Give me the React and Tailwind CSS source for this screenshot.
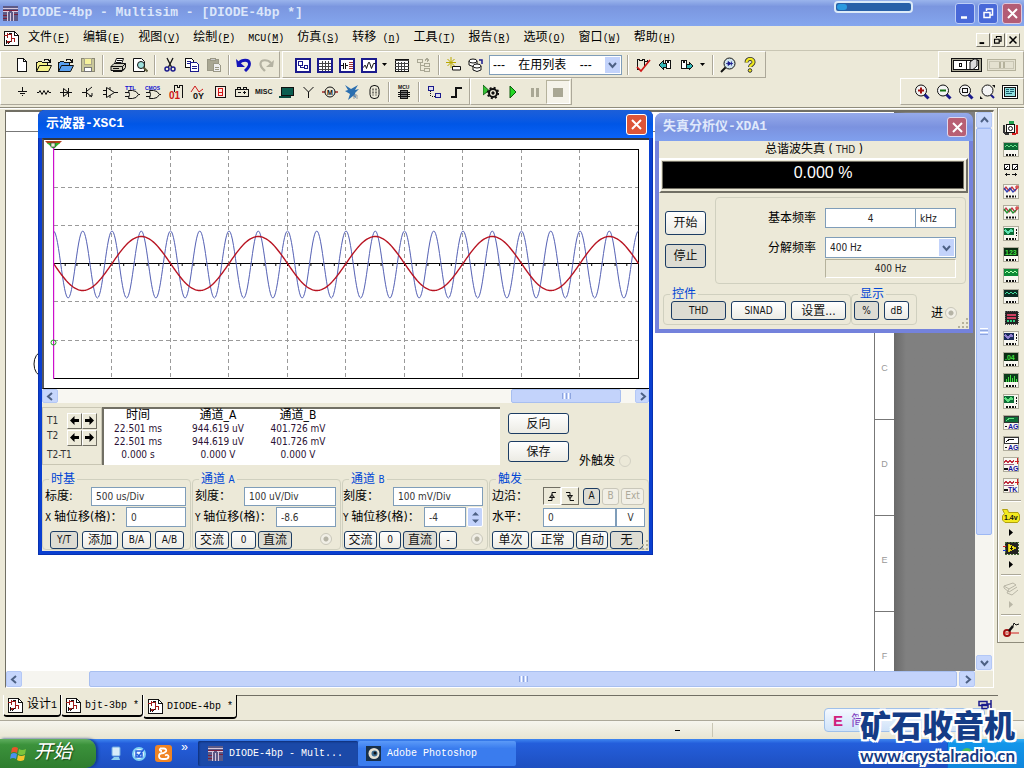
import React from 'react';

const K = '#111';
const NAVY = '#1a1a8c';

function Svg({ w = 16, h = 16, children, smooth = false }) {
  return (
    <svg width={w} height={h} viewBox={`0 0 ${w} ${h}`} fill="none" stroke={K} strokeWidth="1"
      shapeRendering={smooth ? 'auto' : 'crispEdges'} aria-hidden="true">
      {children}
    </svg>
  );
}

const folder = (c) => (
  <Svg>
    <path d="M.5 14.5v-9h1l1-1h3l1 1h5v3" fill={c} />
    <path d="M.5 14.5l3-6h12l-3 6z" fill={c} shapeRendering="auto" />
    <path d="M8 3.500l1-1h3l2 2M14.500 5.500v-4M11 5.500h4" />
  </Svg>
);
const framed = (inner) => (
  <Svg>
    <rect x="1" y="2" width="14" height="13" fill="#fff" stroke={NAVY} strokeWidth="2" />
    {inner}
  </Svg>
);
const magnifier = (inner) => (
  <Svg smooth>
    <path d="M10 10l4.500 4.500" stroke={NAVY} strokeWidth="3" />
    <circle cx="7" cy="6.500" r="5.500" fill="#f4f4f4" />
    {inner}
  </Svg>
);
const gate = (
  <path d="M4.500 6.500h4q4 0 6 4q-2 4-6 4h-4q2-4 0-8zM1 8.500h4M1 12.500h4M14.500 10.500h1.500" shapeRendering="auto" />
);
const miniText = (x, y, t, c, s = 6) => (
  <text x={x} y={y} fill={c} stroke="none" fontSize={s} fontWeight="bold" fontFamily="Liberation Sans, sans-serif">{t}</text>
);

const ICONS = {
  new: <Svg><path d="M3.500 1.500h6l3 3v10h-9z" fill="#fff" /><path d="M9.500 1.500v3h3" /></Svg>,
  open: folder('#f4f08a'),
  openBlue: folder('#5aa0f0'),
  save: <Svg><path d="M1.500 1.500h13v13h-13z" fill="#c9c79a" stroke="#8a8874" /><path d="M4.500 1.500h7v6h-7z" fill="#f6f29c" stroke="#a9a58a" /><path d="M4.500 10.500h7v4h-7z" fill="#fff" stroke="#777" /></Svg>,
  print: <Svg smooth><path d="M4.500 7l2-5.500h7L11.500 7" fill="#fff" /><path d="M1 9.500l3-3h11.500v4l-3 3H1z" fill="#cfcdbf" /><path d="M1 9.500h11.500l3-3M12.500 9.500v4M3 11.500h6M3 14.500h9l3-3M7 3.500h5M6 5.500h5" /></Svg>,
  preview: <Svg smooth><path d="M1.500 1.500h8l3 3v10h-11z" fill="#fff" /><circle cx="9" cy="8" r="3.500" fill="#9fe0dc" /><path d="M11.500 10.500l4 4" strokeWidth="2" stroke="#5b5b3b" /></Svg>,
  cut: <Svg smooth><path d="M5 1l4.500 9M11 1L6.500 10" strokeWidth="1.300" /><circle cx="5" cy="12" r="2" stroke={NAVY} strokeWidth="1.500" /><circle cx="11" cy="12" r="2" stroke={NAVY} strokeWidth="1.500" /></Svg>,
  copy: <Svg><path d="M1.500 1.500h6l2 2v7h-8z" fill="#fff" /><path d="M6.500 5.500h6l2 2v7h-8z" fill="#fff" stroke={NAVY} /><path d="M3 4.500h4M3 6.500h3M8 9.500h5M8 11.500h5" stroke={NAVY} /></Svg>,
  paste: <Svg><path d="M1.500 2.500h11v11h-11z" fill="#a9a793" stroke="#9a9886" /><path d="M4.500 1.500h5v2h-5z" fill="#ccc" stroke="#9a9886" /><path d="M7.500 6.500h5l2 2v6h-7z" fill="#eee" stroke="#9a9886" /><path d="M9 10.500h4M9 12.500h4" stroke="#9a9886" /></Svg>,
  undo: <Svg smooth><path d="M3 6C6 2.500 13 2 13.500 6.500C13.800 10 11 12 9 14" stroke="#1414b8" strokeWidth="2.800" /><path d="M0 2l1 8h8z" fill="#1414b8" stroke="none" /></Svg>,
  redo: <Svg smooth><path d="M13 6C10 2.500 3 2 2.500 6.500C2.200 10 5 12 7 14" stroke="#b4b2a2" strokeWidth="2.200" /><path d="M16 3l-1 7H8z" fill="#b4b2a2" stroke="none" /></Svg>,
  schematic: framed(<path d="M3.500 4.500h4v4h-4zM9.500 8.500h3v3h-3zM5.500 8.500v2h4" stroke={NAVY} />),
  grid: framed(<path d="M2 6.500h12M2 9.500h12M2 12.500h12M5.500 4v10M8.500 4v10M11.500 4v10" stroke="#444" />),
  compList: framed(<><path d="M2 8.500h2M4.500 6v6M6.500 6v6M7 8.500h2" /><path d="M10 5.500h4M10 7.500h4M10 9.500h4M10 11.500h4" stroke="#a03030" /></>),
  graph: framed(<path d="M2.500 10.500l1-2h1l1 3l2-6h1l2 6l2-5h2" shapeRendering="auto" />),
  spread: <Svg><path d="M1.500 2.500h13v12h-13z" fill="#fff" /><path d="M1 3.500h14M1 6.500h14M1 9.500h14M1 12.500h14M4.500 5v9M7.500 5v9M10.500 5v9" stroke="#444" /></Svg>,
  tree: <Svg><path d="M1.500 2.500h5v3h-5zM8.500 6.500h5v3h-5zM8.500 11.500h5v3h-5zM4 6v7h4M4 8.500h4M11 5V1M9 3.500l2-2l2 2" stroke="#a9a794" /></Svg>,
  wizard: <Svg smooth><path d="M5 0v11M0 5.500h10M1.500 2l7 7M8.500 2l-7 7" stroke="#b8a800" /><path d="M6.500 9.500h8v3.500h-8z" fill="#fff" /></Svg>,
  database: <Svg smooth><path d="M1 4v4q4 3 8 0V4" fill="#fff" /><ellipse cx="5" cy="4" rx="4" ry="2" fill="#fff" /><path d="M5 9v4q4 3 8 0V9" fill="#fff" /><ellipse cx="9" cy="9" rx="4" ry="2" fill="#fff" /><path d="M11 3h3v4" stroke={NAVY} strokeWidth="1.500" /></Svg>,
  erc: <Svg><path d="M5 12.500h-2.500v-10h2v1h3v-1h2v6M10 4.500h2.500v-2" /><path d="M2 10l4 4l9-11" stroke="#d01818" strokeWidth="1.700" shapeRendering="auto" /></Svg>,
  back: <Svg><path d="M8.500 5.500v-2h2v2h1v-2h2v8h-5" fill="#fff" /><path d="M2 8l4-4v2h3v4H6v2z" fill="#35b8b8" /></Svg>,
  fwd: <Svg><path d="M8.500 11.500h-6v-8h2v2h1v-2h2v3" fill="#fff" /><path d="M14 9l-4-4v2H7v4h3v2z" fill="#35b8b8" /></Svg>,
  find: <Svg smooth><path d="M6 10l-5 5" stroke={K} strokeWidth="2" /><circle cx="9.500" cy="6.500" r="5.500" fill="#cfe4ee" /><path d="M8 4.500v4l3-2zM6 6.500h7M11.500 4.500v4" fill={NAVY} stroke={NAVY} strokeWidth=".8" /></Svg>,
  help: <Svg smooth><path d="M4.500 5.500c0-5 7.500-4.500 7 0c0 2-3.500 2.500-3.500 4.500" stroke="#333" strokeWidth="4" /><path d="M4.500 5.500c0-5 7.500-4.500 7 0c0 2-3.500 2.500-3.500 4.500" stroke="#f0e820" strokeWidth="2.300" /><circle cx="8" cy="13.500" r="1.800" fill="#f0e820" stroke="#333" /></Svg>,
  ground: <Svg><path d="M8.500 3v4M4 7.500h9M6 9.500h5M8 11.500h1" /></Svg>,
  resistor: <Svg w={18}><path d="M2 8.500h2l1-2l2 4l2-4l2 4l2-4l1 2h2" shapeRendering="auto" /></Svg>,
  diode: <Svg><path d="M2 8.500h12M5.500 4.500v8l5-4zM10.500 4v9" shapeRendering="auto" /></Svg>,
  transistor: <Svg><path d="M2 8.500h4M6.500 4v9M7 7l5-4M7 9l5 4M9 12h3v-3" shapeRendering="auto" /></Svg>,
  analog: <Svg><path d="M4.500 3.500v10l8-5zM1 6.500h3M1 10.500h3M12 8.500h4M8 3v3M8 11v3" shapeRendering="auto" /></Svg>,
  ttl: <Svg>{gate}{miniText(1, 6, 'TTL', '#1414d0', 6)}</Svg>,
  cmos: <Svg w={18}>{gate}{miniText(0, 6, 'CMOS', '#1414d0', 5)}</Svg>,
  digital: <Svg><path d="M6.500 8v-6.500h3v2h2v-2h3v12" />{miniText(1, 15, '01', '#d01818', 10)}</Svg>,
  mixed: <Svg smooth><path d="M1 8L5 2l4 6l4-3" stroke="#d01818" />{miniText(3, 15, '0Y', K, 9)}</Svg>,
  indicator: <Svg><path d="M3.500 2.500h10v11h-10z" fill="#fde9e4" /><path d="M6.500 4.500h4v7h-4zM6 8.500h5" stroke="#d01818" /></Svg>,
  power: <Svg><path d="M1.500 5.500h13v7h-13zM3.500 5V3h3v2M9.500 5V3h3v2M4 8.500h3M9 8.500h3M10.500 7v3" /></Svg>,
  misc: <Svg w={20}>{miniText(1, 10, 'MISC', K, 7)}</Svg>,
  periph: <Svg><path d="M3.500 3.500h12v8h-12z" fill="#0b5d50" /><path d="M1 12.500h12" strokeWidth="2" stroke="#0a4a40" /></Svg>,
  rf: <Svg><path d="M8.500 14v-6M8.500 8l-5-5M8.500 8l5-5" shapeRendering="auto" /></Svg>,
  motor: <Svg smooth><path d="M0 8h16" stroke="#a02828" strokeWidth="1.500" /><circle cx="8" cy="8" r="5" fill="#ece9d8" />{miniText(5, 11, 'M', K, 7)}</Svg>,
  ni: <Svg smooth><path d="M1 1l6 4l7-4l-3 5l4-1l-4 4l1 5l-3-2l-5 4l2-6L1 7l3-1z" fill="#2a6fb0" stroke="none" /><path d="M10 15v-4h3v4" stroke="#999" /></Svg>,
  connector: <Svg smooth><rect x="4" y="1.500" width="9" height="13" rx="4" /><path d="M7 4.500v7M10 4.500v7" strokeDasharray="2 1" /></Svg>,
  mcu: <Svg><path d="M4.500 6.500h7v8h-7z" fill="#777" />{miniText(2, 5, 'MCU', K, 5)}<path d="M2 8.500h12M2 10.500h12M2 12.500h12" /></Svg>,
  hier: <Svg><path d="M2.500 2.500h5v4h-5z" fill="#dde" stroke={NAVY} /><path d="M9.500 9.500h5v4h-5z" fill="#dde" stroke={NAVY} /><path d="M4.500 7v5h5" strokeDasharray="1 1" /></Svg>,
  bus: <Svg><path d="M3 13h5V4h6" strokeWidth="2" /></Svg>,
  gear: <Svg smooth><path d="M0 1v10l6-4.500z" fill="#35c435" stroke="#186018" /><circle cx="10" cy="9" r="4" strokeWidth="2" fill="#ece9d8" /><circle cx="10" cy="9" r="5.300" strokeWidth="1.800" strokeDasharray="2 2.160" /><circle cx="10" cy="9" r="1.200" fill={K} /></Svg>,
  play: <Svg smooth><path d="M5 2v12l6-6z" fill="#25d825" stroke="#0a5a0a" /></Svg>,
  pause: <Svg><path d="M5 4v9M10 4v9" stroke="#a9a794" strokeWidth="3" /></Svg>,
  stop: <Svg><rect x="3" y="4" width="10" height="9" fill="#a9a794" stroke="none" /></Svg>,
  zin: magnifier(<path d="M4 6.500h6M7 3.500v6" stroke="#a01010" strokeWidth="2" />),
  zout: magnifier(<path d="M4 6.500h6" stroke="#107010" strokeWidth="2" />),
  zarea: magnifier(<rect x="4.500" y="4.500" width="5" height="4" />),
  zfit: <Svg smooth><path d="M10 10l4 4" stroke={NAVY} strokeWidth="2" /><circle cx="7.500" cy="6.500" r="5.500" fill="#f4f4f4" /><path d="M12 1h3v3zM0 12v3h3z" fill={K} stroke="none" /></Svg>,
  full: <Svg><rect x=".5" y="1.500" width="15" height="13" rx="1" fill="#fff" /><rect x="2.500" y="3.500" width="11" height="9" fill="#8fdede" stroke={K} /><path d="M4 5.500h3M8 5.500h4M4 7.500h3M8 7.500h4M4 9.500h6" stroke="#1c5c6c" /></Svg>,
};

function Tool({ name, label, boxed = false }) {
  return (
    <button type="button" aria-label={label}
      className={boxed
        ? 'flex h-6 w-6 shrink-0 items-center justify-center border border-[#b5b29c] border-r-white border-b-white bg-[#f5f3ea]'
        : 'flex h-6 w-[22px] shrink-0 items-center justify-center'}>
      {ICONS[name]}
    </button>
  );
}
const Sep = () => <div className="mx-[3px] h-5 w-0.5 shrink-0 border-l border-[#aca899] bg-white" />;
const Drop = ({ label }) => (
  <button type="button" aria-label={label} className="mr-0.5 flex h-6 w-[9px] shrink-0 items-center justify-center">
    <svg width="5" height="3" viewBox="0 0 5 3" aria-hidden="true"><path d="M0 0h5L2.500 3z" fill="#000" /></svg>
  </button>
);
const Bar = ({ children, className = '' }) => (
  <div className={`flex items-center border-t border-r border-b border-l border-t-white border-r-[#aca899] border-b-[#aca899] border-l-white ${className}`}>{children}</div>
);

const DocIcon = () => (
  <svg width="17" height="16" viewBox="0 0 17 16" fill="none" shapeRendering="crispEdges" className="shrink-0" aria-hidden="true">
    <path d="M1.500 1.500h10l4 4v10h-14z" fill="#fff" stroke="#111" />
    <path d="M11.500 1.500v4h4" stroke="#111" />
    <path d="M1 5.500h3M4.500 3v5M5 4.500h3v7h-4M8 8.500h3v3M4 12.500h2" stroke="#a01c1c" />
    <path d="M5.500 3.500h3M3.500 10v4M5 13.500l3-2" stroke="#111" />
  </svg>
);
const AppIcon = () => (
  <svg width="15" height="15" viewBox="0 0 15 15" shapeRendering="crispEdges" className="shrink-0" aria-hidden="true">
    <rect width="15" height="15" fill="#5d5a86" />
    <path d="M0 2.500h15M0 5.500h6M9 5.500h6M4.500 5v10M7.500 7v8M10.500 5v10" stroke="#d8c8dc" />
    <path d="M0 4h15M0 9h4M11 8h4M0 12h4" stroke="#7a1f3d" />
  </svg>
);

const MENUS = [['文件', '(', 'F', ')'], ['编辑', '(', 'E', ')'], ['视图', '(', 'V', ')'], ['绘制', '(', 'P', ')'], ['', 'MCU(', 'M', ')'], ['仿真', '(', 'S', ')'], ['转移', ' (', 'n', ')'], ['工具', '(', 'T', ')'], ['报告', '(', 'R', ')'], ['选项', '(', 'O', ')'], ['窗口', '(', 'W', ')'], ['帮助', '(', 'H', ')']];

function WinGlyph({ kind, color = '#fff', s = 13 }) {
  return (
    <svg width={s} height={s} viewBox="0 0 13 13" fill="none" stroke={color} aria-hidden="true">
      {kind === 'min' && <path d="M2 10.500h6" strokeWidth="2.500" />}
      {kind === 'max' && <path d="M4.500 4V2h6v6h-2M2 5.500h6v5h-6zM2 5.500h6" strokeWidth="1.500" />}
      {kind === 'close' && <path d="M2 2l9 9M11 2l-9 9" strokeWidth="2" />}
    </svg>
  );
}

function Btn({ children, on = false, off = false, className = '' }) {
  const tone = off
    ? 'border-[#c9c7ba] bg-[#f1efe6] text-[#aca899]'
    : on ? 'border-[#1c3c63] bg-[#dddcd3] text-[#111]' : 'border-[#1c3c63] bg-gradient-to-b from-white to-[#ecebe4] text-[#111]';
  return (
    <button type="button" disabled={off} aria-pressed={on}
      className={`flex shrink-0 items-center justify-center rounded-[3px] border whitespace-nowrap leading-none ${tone} ${className}`}>
      {children}
    </button>
  );
}
const Field = ({ label, value, className = '' }) => (
  <input aria-label={label} defaultValue={value}
    className={`min-w-0 border border-[#7f9db9] bg-white text-[10px] text-[#333] outline-none ${className}`} />
);
const Radio = ({ label, dot = true }) => (
  <input type="radio" aria-label={label} disabled
    className={dot
      ? 'h-3 w-3 shrink-0 appearance-none rounded-full border border-[#c9c7ba] bg-[radial-gradient(circle,#b5b3a5_0_2px,#f1efe6_3px)]'
      : 'h-3 w-3 shrink-0 appearance-none rounded-full border border-[#d3d1c4]'} />
);
function Group({ title, children, className = '' }) {
  return (
    <fieldset className={`min-w-0 rounded-[4px] border border-[#d0d0bf] ${className}`}>
      <legend className="ml-1.5 px-0.5 text-[12px] leading-[13px] text-[#0046d5]">{title}</legend>
      {children}
    </fieldset>
  );
}
const CJK = ({ children }) => <span className="text-[12px] text-black">{children}</span>;
const Grip = () => (
  <svg width="12" height="12" viewBox="0 0 12 12" className="absolute right-0 bottom-0" aria-hidden="true"><path d="M9 1h2v2H9zM5 5h2v2H5zM9 5h2v2H9zM1 9h2v2H1zM5 9h2v2H5zM9 9h2v2H9z" fill="#b5b29c" /></svg>
);

function Chevron({ dir, c = '#4d6185' }) {
  const d = { left: 'M6 1L2 4.500L6 8', right: 'M3 1l4 3.500L3 8', up: 'M1 6l3.500-4L8 6', down: 'M1 3l3.500 4L8 3' }[dir];
  return <svg width="9" height="9" viewBox="0 0 9 9" fill="none" stroke={c} strokeWidth="2" aria-hidden="true"><path d={d} /></svg>;
}
const ScrollBtn = ({ dir, className = '' }) => (
  <button type="button" aria-label={`scroll ${dir}`}
    className={`flex shrink-0 items-center justify-center rounded-[2px] border border-[#b4c8f6] bg-[#c6d6fc] ${className}`}>
    <Chevron dir={dir} />
  </button>
);

function path(fn) {
  let d = '';
  for (let x = 0; x <= 585; x += 1) d += `${x ? 'L' : 'M'}${x + 10.5} ${fn(x).toFixed(2)}`;
  return d;
}
const BLUE = path((x) => 123.5 - 33.5 * Math.cos((2 * Math.PI * x) / 29.25));
const RED = path((x) => 122.5 + 27 * Math.sin((2 * Math.PI * x) / 117));

function ScopePlot() {
  const ticks = Array.from({ length: 50 }, (_, i) => 10.5 + i * 11.7);
  return (
    <svg viewBox="1 -1 605 247" className="block w-full" fill="none" role="img" aria-label="示波器波形">
      <g stroke="#9a9a9a" strokeDasharray="4 3" shapeRendering="crispEdges">
        {[1, 2, 3, 4, 5, 6, 7, 8, 9].map((i) => <path key={i} d={`M${Math.floor(10 + i * 58.5)}.500 8v229`} />)}
        {[46.5, 84.5, 160.5, 199.5].map((y) => <path key={y} d={`M11 ${y}h585`} />)}
      </g>
      <path d="M10 8.500h586M10 237.500h586M595.500 8v229" stroke="#000" shapeRendering="crispEdges" />
      <path d="M10 122.500h586" stroke="#000" strokeWidth="1.500" shapeRendering="crispEdges" />
      <path d={ticks.map((t) => `M${t} 122v3`).join('')} stroke="#000" />
      <path d={BLUE} stroke="#5460b4" />
      <path d={RED} stroke="#b81422" strokeWidth="1.400" />
      <path d="M2 0h17l-3 3H5z" fill="#b0401c" />
      <path d="M4 2h13l-6.500 6z" fill="#28b428" />
      <rect x="8" y="2" width="4" height="4" fill="#e8f0d8" stroke="#333" strokeWidth=".6" />
      <rect x="10" y="7" width="1.200" height="231" fill="#cc10cc" />
      <circle cx="10.500" cy="201.500" r="2.500" stroke="#23a023" />
    </svg>
  );
}

const ArrowBtn = ({ dir, label }) => (
  <button type="button" aria-label={label}
    className="flex h-4 w-4 items-center justify-center border border-white border-r-[#716f64] border-b-[#716f64] bg-[#ece9d8]">
    <svg width="9" height="9" viewBox="0 0 9 9" aria-hidden="true">
      <path d={dir === 'l' ? 'M0 4.500L4.500 0v3h4.500v3H4.500v3z' : 'M9 4.500L4.500 0v3H0v3h4.500v3z'} fill="#000" />
    </svg>
  </button>
);

const READ = [['时间', '22.501 ms', '22.501 ms', '0.000 s'], ['通道_A', '944.619 uV', '944.619 uV', '0.000 V'], ['通道_B', '401.726 mV', '401.726 mV', '0.000 V']];

function Scope() {
  return (
    <section aria-label="示波器" className="absolute top-[2px] left-[38px] z-10 w-[615px] rounded-t-[7px] bg-[#0a3fd0] px-1 pb-1 font-['DejaVu_Sans_Condensed','Noto_Sans_CJK_SC',sans-serif] text-[10px] shadow-[inset_1px_0_0_#0831b0,inset_-1px_-1px_0_#0831b0]">
      <header className="-mx-1 flex h-7 items-center justify-between rounded-t-[7px] bg-gradient-to-b from-[#1c5fd8] via-[#0056e6] to-[#0a62f8] pr-1.5 pl-2">
        <h2 className="font-['Liberation_Mono','Noto_Sans_CJK_SC',monospace] text-[13px] font-bold text-white">示波器-XSC1</h2>
        <button type="button" aria-label="关闭" className="flex h-[21px] w-[21px] items-center justify-center rounded-[3px] border border-white bg-[#dd5538]"><WinGlyph kind="close" /></button>
      </header>
      <div className="relative bg-[#ece9d8]">
        <div className="border-t-2 border-b border-l-2 border-t-[#33363f] border-b-black border-l-[#55565c] bg-white pb-px"><ScopePlot /></div>
        <div className="flex h-3.5 items-stretch bg-[#f8f7f2]">
          <ScrollBtn dir="left" className="w-4" />
          <div className="flex flex-1 justify-end pr-3.5">
            <div className="flex w-[110px] items-center justify-center gap-px rounded-[2px] border border-[#a8bff0] bg-[#c3d3fb]">
              <i className="h-1.5 w-px bg-[#8da5e0]" /><i className="h-1.5 w-px bg-white" /><i className="h-1.5 w-px bg-[#8da5e0]" /><i className="h-1.5 w-px bg-white" /><i className="h-1.5 w-px bg-[#8da5e0]" />
            </div>
          </div>
          <ScrollBtn dir="right" className="w-3.5" />
        </div>
        <div className="flex pt-1">
          <div className="flex h-[58px] w-[60px] flex-col border border-[#c9c6b4] px-1 pt-1 text-[#333]">
            <div className="flex h-[17px] items-center"><span className="w-[21px]">T1</span><ArrowBtn dir="l" label="T1 左移" /><ArrowBtn dir="r" label="T1 右移" /></div>
            <div className="flex h-[17px] items-center"><span className="w-[21px] pb-1 leading-none">T2</span><ArrowBtn dir="l" label="T2 左移" /><ArrowBtn dir="r" label="T2 右移" /></div>
            <div className="leading-[18px]">T2-T1</div>
          </div>
          <div className="h-[58px] w-[398px] border-t-2 border-l-2 border-[#716f64] bg-white">
            <table className="w-[228px] table-fixed text-center leading-[13px] text-[#2b1133]">
              <colgroup><col className="w-[68px]" /><col className="w-[92px]" /><col className="w-[68px]" /></colgroup>
              <thead><tr className="text-black">{READ.map((c) => <th key={c[0]} scope="col" className="p-0 text-[12px] leading-[13px] font-normal">{c[0]}</th>)}</tr></thead>
              <tbody>{[1, 2, 3].map((r) => <tr key={r}>{READ.map((c) => <td key={c[0]} className="p-0 whitespace-nowrap">{c[r]}</td>)}</tr>)}</tbody>
            </table>
          </div>
          <div className="flex flex-col gap-[7px] pt-1.5 pl-2">
            <Btn className="h-[21px] w-[61px] text-[12px]">反向</Btn>
            <Btn className="h-[21px] w-[61px] text-[12px]">保存</Btn>
          </div>
          <label className="flex translate-y-0.5 items-center gap-1 self-end pl-2.5 leading-none"><CJK>外触发</CJK><Radio label="外触发" dot={false} /></label>
        </div>
        <div className="flex gap-px pt-2 pb-px whitespace-nowrap">
          <Group title="时基" className="w-[149px]">
            <div className="flex h-5 items-center justify-between pr-1 pl-0.5"><CJK>标度:</CJK><Field label="标度" value="500 us/Div" className="h-[19px] w-[95px] pl-1" /></div>
            <div className="mt-px flex h-5 items-center justify-between pr-1 pl-0.5"><span>X <CJK>轴位移(格)：</CJK></span><Field label="X 轴位移" value="0" className="h-5 w-[60px] pl-1" /></div>
            <div className="mt-1 flex gap-1 pl-[7px]"><Btn on className="h-[18px] w-[28px]">Y/T</Btn><Btn className="h-[18px] w-9 text-[12px]">添加</Btn><Btn className="h-[18px] w-[29px]">B/A</Btn><Btn className="h-[18px] w-[29px]">A/B</Btn></div>
          </Group>
          <Group title={<>通道 <span className="text-[10px]">A</span></>} className="w-[149px]">
            <div className="flex h-5 items-center justify-between pr-1 pl-0.5"><CJK>刻度：</CJK><Field label="刻度 A" value="100 uV/Div" className="h-[19px] w-[92px] pl-1" /></div>
            <div className="mt-px flex h-5 items-center justify-between pr-1 pl-0.5"><span>Y <CJK>轴位移(格)：</CJK></span><Field label="Y 轴位移 A" value="-8.6" className="h-5 w-[60px] pl-1" /></div>
            <div className="mt-1 flex items-center gap-0.5 pr-2 pl-0.5"><Btn className="h-[18px] w-[34px] text-[12px]">交流</Btn><Btn className="h-[18px] w-[25px]">0</Btn><Btn on className="h-[18px] w-[34px] text-[12px]">直流</Btn><span className="ml-auto leading-none"><Radio label="通道 A" /></span></div>
          </Group>
          <Group title={<>通道 <span className="text-[10px]">B</span></>} className="w-[146px]">
            <div className="flex h-5 items-center justify-between pr-1"><CJK>刻度：</CJK><Field label="刻度 B" value="100 mV/Div" className="h-[19px] w-[90px] pl-1" /></div>
            <div className="mt-px flex h-5 items-center justify-between pr-1"><span>Y <CJK>轴位移(格)：</CJK></span>
              <span className="flex items-center"><Field label="Y 轴位移 B" value="-4" className="h-5 w-[42px] pl-1" />
                <button type="button" aria-label="调整位移" className="ml-px flex h-5 w-4 flex-col items-center justify-center gap-px rounded-[2px] border border-white bg-[#c3d3fb]">
                  <svg width="7" height="13" viewBox="0 0 7 13" fill="#4d6185" aria-hidden="true"><path d="M0 4.500L3.500 1L7 4.500zM0 8.500L3.500 12L7 8.500z" /></svg>
                </button></span></div>
            <div className="mt-1 flex items-center gap-0.5 pr-1 pl-px"><Btn className="h-[18px] w-[33px] text-[12px]">交流</Btn><Btn className="h-[18px] w-[22px]">0</Btn><Btn on className="h-[18px] w-[34px] text-[12px]">直流</Btn><Btn className="h-[18px] w-[18px]">-</Btn><span className="ml-auto leading-none"><Radio label="通道 B" /></span></div>
          </Group>
          <Group title="触发" className="flex-1">
            <div className="flex h-5 items-center pl-0.5"><span className="w-[51px]"><CJK>边沿：</CJK></span>
              <button type="button" aria-label="上升沿" aria-pressed="true" className="flex h-[18px] w-[18px] items-center justify-center border border-[#716f64] border-r-white border-b-white"><svg width="10" height="11" viewBox="0 0 10 11" fill="none" stroke="#111" aria-hidden="true"><path d="M1 9.500h4v-8h4M2.500 6.500h5L5 3.500z" /></svg></button>
              <button type="button" aria-label="下降沿" className="flex h-[18px] w-[18px] items-center justify-center border border-white border-r-[#716f64] border-b-[#716f64]"><svg width="10" height="11" viewBox="0 0 10 11" fill="none" stroke="#111" aria-hidden="true"><path d="M1 1.500h4v8h4M2.500 4.500h5L5 7.500z" /></svg></button>
              <Btn on className="ml-1 h-[17px] w-[17px]">A</Btn><Btn off className="ml-0.5 h-[17px] w-[17px]">B</Btn><Btn off className="ml-0.5 h-[17px] w-[23px]">Ext</Btn></div>
            <div className="mt-px flex h-5 items-center pl-0.5"><span className="w-[51px]"><CJK>水平：</CJK></span><Field label="水平" value="0" className="h-[19px] w-[73px] pl-1" /><Field label="单位" value="V" className="h-[19px] w-[29px] text-center" /></div>
            <div className="mt-1 flex gap-0.5 pl-0.5"><Btn className="h-[18px] w-[37px] text-[12px]">单次</Btn><Btn className="h-[18px] w-[43px] text-[12px]">正常</Btn><Btn className="h-[18px] w-[32px] text-[12px]">自动</Btn><Btn on className="h-[18px] w-[33px] text-[12px]">无</Btn></div>
          </Group>
        </div>
        <Grip />
      </div>
    </section>
  );
}

function Analyzer() {
  return (
    <section aria-label="失真分析仪" className="absolute top-[5px] left-[655px] z-10 w-[318px] rounded-t-[7px] bg-[#7482dc] px-1 pb-1 font-['DejaVu_Sans_Condensed','Noto_Sans_CJK_SC',sans-serif] text-[10px] text-[#222]">
      <header className="-mx-1 flex h-7 items-center justify-between rounded-t-[7px] bg-gradient-to-b from-[#96aaea] via-[#7b92df] to-[#80a0ee] pr-1.5 pl-2">
        <h2 className="font-['Liberation_Mono','Noto_Sans_CJK_SC',monospace] text-[13px] font-bold text-[#dfe8fb]">失真分析仪-XDA1</h2>
        <button type="button" aria-label="关闭" className="flex h-5 w-5 items-center justify-center rounded-[3px] border border-[#dfd8ee] bg-[#b85f74]"><WinGlyph kind="close" /></button>
      </header>
      <div className="relative bg-[#ece9d8] pb-1">
        <div className="h-[17px] text-center leading-[17px]"><CJK>总谐波失真 ( </CJK>THD<CJK> )</CJK></div>
        <div className="mr-px border-2 border-white border-r-[#716f64] border-b-[#716f64] p-px pr-0.5 pb-0.5">
          <output className="flex h-7 items-center justify-center border border-[#716f64] bg-black pb-1 pl-5 font-['Liberation_Sans',sans-serif] text-[16px] text-white">0.000 %</output>
        </div>
        <div className="flex gap-[9px] pt-1 pr-[3px] pl-1.5">
          <div className="flex w-[41px] flex-col gap-[9px] pt-3.5"><Btn className="h-6 text-[12px]">开始</Btn><Btn on className="h-6 text-[12px]">停止</Btn></div>
          <div className="flex-1 rounded-[4px] border border-[#d0d0bf] pt-2.5 pr-[9px] pb-[5px]">
            <div className="flex h-5 items-center justify-end"><label htmlFor="base" className="mr-[9px] text-[12px] text-black">基本频率</label>
              <input id="base" defaultValue="4" className="h-5 w-[91px] border border-[#7f9db9] bg-white text-center" /><input aria-label="频率单位" defaultValue="kHz" className="h-5 w-10 border border-l-0 border-[#7f9db9] bg-white pl-1" /></div>
            <div className="mt-[9px] flex h-[21px] items-center justify-end"><label htmlFor="res" className="mr-[9px] text-[12px] text-black">分解频率</label>
              <div className="relative"><select id="res" className="h-[21px] w-[131px] appearance-none border border-[#7f9db9] bg-white pl-1"><option>400 Hz</option></select>
                <span className="pointer-events-none absolute top-0.5 right-0.5 flex h-[17px] w-[15px] items-center justify-center bg-[#c3d3fb]"><Chevron dir="down" /></span></div></div>
            <output className="mt-px ml-auto flex h-[19px] w-[131px] items-center justify-center border border-[#b5b29c] border-r-white border-b-white">400 Hz</output>
          </div>
        </div>
        <div className="flex pt-1 pl-1">
          <Group title="控件" className="w-[188px]"><div className="flex gap-[5px] pb-1 pl-[7px]"><Btn on className="h-[19px] w-[55px]">THD</Btn><Btn className="h-[19px] w-[55px]">SINAD</Btn><Btn className="h-[19px] w-[55px] text-[12px]">设置...</Btn></div></Group>
          <Group title="显示" className="w-[66px]"><div className="flex gap-[5px] pb-1 pl-0.5"><Btn on className="h-[19px] w-[25px]">%</Btn><Btn className="h-[19px] w-[25px]">dB</Btn></div></Group>
          <label className="flex items-center gap-0.5 pt-3 pl-3.5"><CJK>进</CJK><Radio label="进" /></label>
        </div>
        <Grip />
      </div>
    </section>
  );
}

const INST = [
  ['万用表', 'meter'], ['函数发生器', 'wave', '#0c6b35', '#6be08c'], ['瓦特计', 'watt'], ['示波器', 'scope', '#fff', '#c03040', '#3040b0'], ['四通道示波器', 'scope', '#fff', '#c03040', '#209030'],
  ['波特图', 'side', '#0c6b35', '#5be0b0'], ['频率计', 'text', '123'], ['字发生器', 'wave', '#0c8a35', '#b0ffb0'], ['逻辑分析仪', 'wave', '#0b2b22', '#40e0a0'], ['逻辑转换', 'analyzer'],
  ['IV 分析', 'side', '#1a2a5a', '#9080d0'], ['失真分析', 'text', '.04'], ['频谱分析', 'bars'], ['网络分析', 'side', '#0c6b35', '#60e080'], ['安捷伦发生器', 'ag', 'AG', '#0c6b35'], ['安捷伦万用表', 'ag', 'AG', '#fff'], ['安捷伦示波器', 'agw', 'AG'], ['泰克示波器', 'agw', 'TK'],
];
function InstIcon({ d }) {
  const [, kind, a, b, c] = d;
  const dots = <path d="M3 12.500h10" stroke="#111" strokeWidth="2" strokeDasharray="2 1" />;
  const frame = <rect x=".5" y=".5" width="15" height="14" fill="#f8f7f0" stroke="#b0ad9c" />;
  if (kind === 'meter') return <Svg><path d="M6 0h5v3H6z" fill="#20a050" stroke="none" /><path d="M3.500 3.500h8v8h-8z" fill="#fff" /><circle cx="7.500" cy="7.500" r="2" shapeRendering="auto" /><path d="M1 4v7l2 2h3" stroke="#333" strokeWidth="2" /><path d="M14 4v8l-2 1h-3" stroke="#d02020" strokeWidth="2" /></Svg>;
  if (kind === 'watt') return <Svg><path d="M1.500 1.500h5v5h-5zM9.500 1.500h5v5h-5z" fill="#fff" /><path d="M2 6l3-3M11 6l3-3" /><path d="M2 11.500h5M9 11.500h5M3.500 10v3M12.500 10v3" /></Svg>;
  if (kind === 'wave') return <Svg>{frame}<rect x="1" y="1" width="14" height="7" fill={a} stroke="none" /><path d="M2 5l2-2l2 2l2-2l2 2l2-2l2 2" stroke={b} />{dots}</Svg>;
  if (kind === 'scope') return <Svg smooth>{frame}<path d="M1 6l2-3l3 4l3-4l3 4l2-3" stroke={b} strokeWidth="1.300" /><path d="M1 4l3 4l3-4l3 4l3-3" stroke={c} strokeWidth="1.300" />{dots}<path d="M14 1v4M12 3h4" stroke="#d02020" /></Svg>;
  if (kind === 'side') return <Svg>{frame}<rect x="1" y="2" width="10" height="7" fill={a} stroke="none" /><path d="M2 4l3 3l3-3l2 2" stroke={b} strokeWidth="1.500" /><path d="M13.500 3v7" strokeDasharray="2 1" />{dots}</Svg>;
  if (kind === 'text') return <Svg>{frame}<rect x="1" y="1" width="14" height="8" fill="#0b2b12" stroke="none" />{miniText(2, 8, a, '#40e040', 7)}{dots}</Svg>;
  if (kind === 'analyzer') return <Svg><rect x="2" y="1" width="13" height="13" fill="#222" stroke="#555" strokeDasharray="1 1" /><path d="M4 4.500h9M4 7.500h9" stroke="#d04060" strokeWidth="2" /><path d="M4 10.500h9" stroke="#30d080" strokeWidth="2" strokeDasharray="2 1" /></Svg>;
  if (kind === 'bars') return <Svg>{frame}<rect x="1" y="1" width="14" height="8" fill="#0b3b1a" stroke="none" /><path d="M3.500 9V6M5.500 9V4M7.500 9V2M9.500 9V5M11.500 9V3M13.500 9V6" stroke="#40e040" />{dots}</Svg>;
  if (kind === 'ag') return <Svg>{frame}<rect x="1" y="1" width="14" height="6" fill={b} stroke="#333" /><path d="M3 6l4-3h4" stroke={b === '#fff' ? K : '#60e080'} />{miniText(5, 14, a, '#1414a0', 7)}<path d="M2 11.500h2" /></Svg>;
  return <Svg>{frame}<path d="M1 6l2-3l2 3l2-3l2 3l2-3" stroke="#c03040" /><path d="M1 7.500h10" stroke="#a06080" /><path d="M14 1v6M12 4h4" stroke="#d02020" />{miniText(5, 14, a, '#1414a0', 7)}<path d="M1 11.500h4" strokeWidth="2" /></Svg>;
}
const SideSep = () => <div className="my-1 h-0.5 w-5 border-b border-white bg-[#aca899]" />;
const SideArrow = ({ c = '#000', label }) => <button type="button" aria-label={label} className="flex h-3 w-5 items-center justify-center"><svg width="4" height="7" viewBox="0 0 4 7" aria-hidden="true"><path d="M0 0v7l4-3.500z" fill={c} /></svg></button>;

function SideBar() {
  return (
    <aside className="flex w-[27px] shrink-0 flex-col self-start border-b border-l border-[#8f8c7c] pt-2.5 pb-0.5 shadow-[inset_1px_1px_0_#fff]">
      <div className="flex flex-col items-center">
        {INST.map((d) => <button key={d[0]} type="button" aria-label={d[0]} className="flex h-[21px] w-5 items-center justify-center"><InstIcon d={d} /></button>)}
        <SideSep />
        <button type="button" aria-label="测量探针" className="flex h-5 w-5 items-center justify-center"><Svg w={18} smooth><path d="M.5 1.500h5l1 3h9.500l1.500 2.500v5l-2 2.500H3l-2.500-2.500V8l2-2.500z" fill="#f4ea20" stroke="#b0a010" />{miniText(2, 12, '1.4v', K, 7)}</Svg></button>
        <SideArrow label="探针选项" />
        <button type="button" aria-label="LabVIEW 仪器" className="flex h-5 w-5 items-center justify-center"><Svg><rect x="2" y="2" width="13" height="12" fill="#222" stroke="#4a6a3a" strokeDasharray="2 1" /><path d="M5 4v8l8-4z" fill="#f4ea20" stroke="#d8c810" /><path d="M8.500 6v4M7 8.500h3" /><path d="M0 6.500h3" stroke="#d02020" /><path d="M0 10.500h3" stroke="#2040d0" /></Svg></button>
        <SideArrow label="LabVIEW 选项" />
        <SideSep />
        <button type="button" aria-label="NI 仪器" disabled className="flex h-[18px] w-5 items-center justify-center"><Svg smooth><path d="M1 5l5 3l7-4l-3-2zM1 5v2l5 4l8-5M6 8l-2 4l5 2l6-5" stroke="#b9b6a6" /></Svg></button>
        <SideArrow c="#b9b6a6" label="NI 选项" />
        <SideSep />
        <button type="button" aria-label="电流探针" className="flex h-5 w-5 items-center justify-center"><Svg smooth><circle cx="4" cy="11" r="3" stroke="#a01010" strokeWidth="2" /><path d="M0 11h16" stroke="#d02020" /><path d="M6 9l4-5" strokeWidth="2.500" /><path d="M10 4l1-3l2 2l3-1" /></Svg></button>
      </div>
    </aside>
  );
}

const ROWS = ['', '', 'C', 'D', 'E'];
function Workspace() {
  return (
    <main className="relative flex flex-1 border-t border-[#8f8c7c] shadow-[inset_0_1px_0_#fff]">
      <div className="mt-0.5 flex min-w-0 flex-1 flex-col pl-[5px]">
        <div className="mr-[3px] flex flex-1 flex-col border border-t-2 border-[#716f64] border-r-white border-b-white">
          <div className="flex flex-1">
            <div className="flex flex-1 overflow-hidden bg-[#808080]">
              <div className="flex flex-1 flex-col bg-white">
                <div className="h-5 border-b border-[#777]" />
                <div className="flex flex-1">
                  <div className="flex flex-1 items-start pt-[219px] pl-[27px]"><svg width="14" height="26" viewBox="0 0 14 26" fill="none" stroke="#111" aria-hidden="true"><ellipse cx="9" cy="13" rx="8" ry="12" /></svg></div>
                  <div className="flex w-5 flex-col border-l border-[#777] font-['Liberation_Sans',sans-serif] text-[9px] text-[#999]">
                    {ROWS.map((l, i) => <div key={i} className="flex h-24 shrink-0 items-center justify-center border-b border-[#777] pb-1.5">{l}</div>)}
                    <div className="flex flex-1 items-end justify-center pb-2">F</div>
                  </div>
                </div>
              </div>
              <div className="w-[81px] bg-gradient-to-r from-[#6a6a6a] to-[#808080] to-15%" />
            </div>
            <div className="flex w-[18px] flex-col items-center bg-[#f6f5f0]">
              <ScrollBtn dir="up" className="h-4 w-4" />
              <div className="flex h-[407px] w-4 flex-col items-center justify-center gap-px rounded-[2px] border border-[#9db8f4] bg-[#c3d3fb]"><i className="h-px w-2 bg-white" /><i className="h-px w-2 bg-[#8da5e0]" /><i className="h-px w-2 bg-white" /><i className="h-px w-2 bg-[#8da5e0]" /></div>
              <div className="flex-1" />
              <ScrollBtn dir="down" className="mb-px h-[15px] w-4" />
            </div>
          </div>
          <div className="flex h-4 bg-[#f6f5f0]">
            <ScrollBtn dir="left" className="w-4" />
            <div className="flex flex-1 pr-0.5 pl-[67px]"><div className="flex flex-1 items-center justify-center gap-px rounded-[2px] border border-[#a8bff0] bg-[#c3d3fb]"><i className="h-1.5 w-px bg-[#8da5e0]" /><i className="h-1.5 w-px bg-white" /><i className="h-1.5 w-px bg-[#8da5e0]" /><i className="h-1.5 w-px bg-white" /><i className="h-1.5 w-px bg-[#8da5e0]" /></div></div>
            <ScrollBtn dir="right" className="w-4" />
            <div className="w-[18px] bg-[#ece9d8]" />
          </div>
        </div>
        <div className="h-[7px]" />
      </div>
      <SideBar />
      <Scope />
      <Analyzer />
    </main>
  );
}

const Tab = ({ cjk = '', text, active = false }) => (
  <button type="button" role="tab" aria-selected={active}
    className={`flex items-center gap-[3px] rounded-b-[4px] border-r border-b-2 border-l border-black border-l-white pr-[3px] pl-[3px] ${active ? 'h-6' : 'h-[22px]'}`}>
    <DocIcon /><span className="text-[12px] leading-none">{cjk}<span className="text-[10px]">{text}</span></span>
  </button>
);

function Taskbar() {
  return (
    <footer className="flex h-[29px] shrink-0 items-stretch bg-gradient-to-b from-[#3f86f0] via-[#245edb] via-15% to-[#1e4fc0] text-[10px] text-white">
      <button type="button" className="flex w-24 items-center gap-1.5 rounded-r-[10px] bg-gradient-to-b from-[#5fae5f] via-[#3b923b] via-20% to-[#2f7d2f] pl-2.5 shadow-[2px_0_3px_#123a8a]">
        <svg width="18" height="17" viewBox="0 0 18 17" aria-hidden="true"><path d="M2 3q3-2 6 0L7 8q-3-2-6 0z" fill="#e8552a" /><path d="M9 4q3 2 7 0l-1 5q-4 2-7 0z" fill="#7cc43c" /><path d="M1 9q3-2 6 0l-1 5q-3-2-6 0z" fill="#4a90f0" /><path d="M8 10q3 2 7 0l-1 5q-4 2-7 0z" fill="#f6c52c" /></svg>
        <span className="text-[19px] leading-none text-white italic [text-shadow:1px_1px_1px_#1a4a1a]">开始</span>
      </button>
      <div className="flex w-[102px] items-center gap-[7px] pl-3">
        <a href="#desktop" aria-label="显示桌面"><svg width="16" height="17" viewBox="0 0 16 17" aria-hidden="true"><rect x="4" y="2" width="8" height="9" rx="1" fill="#d8ecfa" stroke="#6fa8e0" /><path d="M3 15h9l-1-3H6z" fill="#8fd0f0" /></svg></a>
        <a href="#outlook" aria-label="桌面"><svg width="17" height="17" viewBox="0 0 17 17" fill="none" aria-hidden="true"><circle cx="8" cy="9" r="6" fill="#eaf6ff" stroke="#7fd0f4" strokeWidth="2" /><path d="M5 6h6v6H5zM6 9l2 2l5-7" stroke="#245edb" strokeWidth="1.500" /></svg></a>
        <a href="#uc" aria-label="UC"><svg width="17" height="17" viewBox="0 0 17 17" fill="none" aria-hidden="true"><rect width="17" height="17" rx="3" fill="#f08424" /><path d="M5 3.500h4q3 .5 2 3L8.500 8Q4 8 4 11q0 3 4 3h2q3.500 0 3.500-2.500Q13 9 10 10.500M5 3.500Q4 6 7 6" stroke="#fff" strokeWidth="1.800" /></svg></a>
        <span className="pb-3 pl-0.5 text-[12px]">»</span>
      </div>
      <button type="button" aria-pressed="true" className="my-0.5 flex w-[160px] items-center gap-1.5 rounded-[2px] bg-[#1b49a8] pl-2.5 shadow-[inset_1px_1px_2px_#0e2f78]"><AppIcon />DIODE-4bp - Mult...</button>
      <button type="button" className="my-0.5 flex w-[158px] items-center gap-1.5 rounded-[2px] bg-gradient-to-b from-[#5b9af8] to-[#3a7cee] to-30% pl-2"><svg width="15" height="15" viewBox="0 0 15 15" aria-hidden="true"><rect width="15" height="15" fill="#18304a" /><circle cx="8" cy="7.500" r="5.500" fill="#e4e0d4" /><circle cx="8.500" cy="7.500" r="3" fill="#3a6a90" /><circle cx="9" cy="7" r="1.500" fill="#111" /></svg>Adobe Photoshop</button>
      <div className="flex-1" />
      <div className="flex w-[77px] items-center gap-2 border-l border-[#0e5fc8] bg-gradient-to-b from-[#35b0f4] via-[#1296ea] via-15% to-[#0f86dc] pl-3"><svg width="14" height="14" viewBox="0 0 14 14" aria-hidden="true"><circle cx="7" cy="7" r="6" fill="#4cc060" /></svg></div>
    </footer>
  );
}

const OUT = '[text-shadow:2px_0_#fff,-2px_0_#fff,0_2px_#fff,0_-2px_#fff,2px_2px_#fff,-2px_2px_#fff,2px_-2px_#fff,-2px_-2px_#fff]';

export default function App() {
  return (
    <div className="relative flex min-h-screen flex-col overflow-hidden bg-[#ece9d8] font-['Liberation_Mono','Noto_Sans_CJK_SC',monospace] text-[12px] text-black">
      <header className="relative flex h-[26px] items-center bg-gradient-to-b from-[#9ab4ec] via-[#7b96df] via-25% to-[#84a6ee] pr-0.5 pl-[3px]">
        <AppIcon />
        <h1 className="ml-1 flex-1 text-[13px] font-bold whitespace-pre text-[#dbe6fa]">DIODE-4bp - Multisim - [DIODE-4bp *]</h1>
        <div className="flex gap-[3px]">
          <button type="button" aria-label="最小化" className="flex h-[21px] w-5 items-center justify-center rounded-[3px] border border-[#bccdf6] bg-[#4868d8]"><WinGlyph kind="min" /></button>
          <button type="button" aria-label="还原" className="flex h-[21px] w-5 items-center justify-center rounded-[3px] border border-[#bccdf6] bg-[#4868d8]"><WinGlyph kind="max" /></button>
          <button type="button" aria-label="关闭" className="ml-px flex h-[21px] w-5 items-center justify-center rounded-[3px] border border-[#dfc8dc] bg-[#b35c74]"><WinGlyph kind="close" /></button>
        </div>
        <div className="absolute top-px right-[111px] h-3 w-[79px] rounded-[4px] border-2 border-[#dceaf8] bg-[#2860a8] p-px"><div className="h-full w-2.5 rounded-[3px] bg-[#2a9ae0]" /></div>
      </header>

      <nav className="flex h-[25px] items-center border-b border-[#c9c6b4] pr-1 pl-[3px]">
        <DocIcon />
        <div className="ml-2 flex gap-[13px] whitespace-pre">
          {MENUS.map(([c, a, k, b]) => <button key={c + k} type="button" className="leading-none">{c}<span className="text-[10px]">{a}<u>{k}</u>{b}</span></button>)}
        </div>
        <div className="ml-auto flex gap-px pt-1">
          {['min', 'max', 'close'].map((k) => <button key={k} type="button" aria-label={`文档 ${k}`} className="flex h-3.5 w-3.5 items-center justify-center border border-white border-r-[#716f64] border-b-[#716f64]"><WinGlyph kind={k} color="#000" s={10} /></button>)}
        </div>
      </nav>

      <div className="flex h-[27px]">
        <Bar className="w-[280px] pl-2.5">
          <Tool name="new" label="新建" /><Tool name="open" label="打开" /><Tool name="openBlue" label="打开样例" /><Tool name="save" label="保存" /><Sep />
          <Tool name="print" label="打印" /><Tool name="preview" label="打印预览" /><Sep />
          <Tool name="cut" label="剪切" /><Tool name="copy" label="复制" /><Tool name="paste" label="粘贴" /><Sep />
          <Tool name="undo" label="撤销" /><Tool name="redo" label="重做" />
        </Bar>
        <Bar className="ml-0.5 pr-1 pl-[9px]">
          <Tool name="schematic" label="设计工具箱" /><Tool name="grid" label="电子表格" /><Tool name="compList" label="元件列表" /><Tool name="graph" label="图形" /><Drop label="图形选项" />
          <Tool name="spread" label="后处理" /><Tool name="tree" label="父图" /><Sep />
          <Tool name="wizard" label="元件向导" /><Tool name="database" label="数据库" />
          <div className="relative mx-0.5">
            <select aria-label="在用列表" className="h-5 w-[133px] appearance-none border border-[#7f9db9] bg-white pl-[3px] text-[12px] font-['Liberation_Sans','Noto_Sans_CJK_SC',sans-serif]"><option>---&nbsp;&nbsp;&nbsp; 在用列表 &nbsp;&nbsp;&nbsp;---</option></select>
            <span className="pointer-events-none absolute top-0.5 right-0.5 flex h-4 w-[15px] items-center justify-center bg-[#c3d3fb]"><Chevron dir="down" /></span>
          </div>
          <Sep /><Tool name="erc" label="电气规则" /><Tool name="back" label="反向注释" /><Tool name="fwd" label="正向注释" /><Drop label="注释选项" /><Sep />
          <Tool name="find" label="查找" /><Tool name="help" label="帮助" />
        </Bar>
        <div className="flex-1" />
        <Bar className="w-[86px] gap-1 pl-3">
          <button type="button" aria-label="仿真开关"><Svg w={31}><rect x=".5" y="1.500" width="30" height="13" fill="#a9a794" /><rect x="2.500" y="3.500" width="25" height="9" fill="#fff" /><path d="M15.500 3v10" /><path d="M19 12.500V5l4-3h3v7l-4 3.500z" fill="#ddd" shapeRendering="auto" /><rect x="8.500" y="6.500" width="2" height="3" /></Svg></button>
          <button type="button" aria-label="暂停仿真" disabled><Svg w={31}><rect x="1.500" y="2.500" width="28" height="11" fill="#e4e1d0" stroke="#b5b29c" /><rect x="3.500" y="4.500" width="24" height="7" stroke="#c9c6b4" /><path d="M14 5v6M18 5v6" stroke="#b5b29c" strokeWidth="2" /></Svg></button>
        </Bar>
      </div>

      <div className="flex h-[27px]">
        <Bar className="w-[470px] pl-2.5">
          {['ground', 'resistor', 'diode', 'transistor', 'analog', 'ttl', 'cmos', 'digital', 'mixed', 'indicator', 'power', 'misc', 'periph', 'rf', 'motor', 'ni', 'connector'].map((n) => <Tool key={n} name={n} label={n} />)}
          <Sep /><Tool name="mcu" label="MCU" /><Sep /><Tool name="hier" label="层次块" /><Tool name="bus" label="总线" />
        </Bar>
        <Bar className="w-[102px] pl-[9px]"><Tool name="gear" label="仿真设置" /><Tool name="play" label="运行" /><Tool name="pause" label="暂停" /><Tool name="stop" label="停止" boxed /></Bar>
        <div className="flex-1" />
        <Bar className="w-[124px] pl-2.5"><Tool name="zin" label="放大" /><Tool name="zout" label="缩小" /><Tool name="zarea" label="区域缩放" /><Tool name="zfit" label="适合窗口" /><Tool name="full" label="全屏" /></Bar>
      </div>
      <div className="h-0.5" />

      <Workspace />

      <div className="flex h-[26px] items-start border-b border-[#aca899]">
        <div role="tablist" className="flex items-start pl-[3px]"><Tab cjk="设计" text="1" /><Tab text="bjt-3bp *" /><Tab active text="DIODE-4bp *" /></div>
        <div className="mr-[26px] h-px flex-1 bg-[#716f64]" />
      </div>
      <div className="flex h-[18px] items-center bg-gradient-to-b from-[#f6f5ee] to-[#e8e5d2]"><span className="flex-1" /><span className="mr-8 h-px w-[5px] bg-black" /><span className="mr-[311px] h-3.5 w-px bg-[#c9c6b4]" /></div>
      <Taskbar />

      <div className="absolute right-[39px] bottom-9 flex h-6 w-[161px] items-center gap-2 rounded-[4px] border border-[#9fc0ea] bg-gradient-to-b from-[#f4f9ff] to-[#cfe2f8] pl-2 font-['Liberation_Sans','Noto_Sans_CJK_SC',sans-serif]">
        <span className="text-[15px] leading-none font-bold text-[#d0207c]">E</span><span className="text-[14px] leading-none text-[#8040c0]">简</span>
      </div>
      <svg width="14" height="12" viewBox="0 0 14 12" className="absolute right-8 bottom-14" fill="none" stroke="#1a1a8c" aria-hidden="true"><path d="M1 1.500h8v4H1zM4 4.500h6v4H4zM13 0v8M9 4h4" strokeWidth="1.500" /></svg>
      <div className="absolute right-[9px] bottom-0 text-center text-[#153c86]">
        <div className={`font-['Noto_Sans_CJK_SC',sans-serif] text-[31px] leading-[40px] font-black whitespace-nowrap ${OUT}`}>矿石收音机</div>
        <div className={`font-['Lato',sans-serif] text-[17px] leading-[24px] font-bold ${OUT}`}>www.crystalradio.cn</div>
      </div>
    </div>
  );
}
